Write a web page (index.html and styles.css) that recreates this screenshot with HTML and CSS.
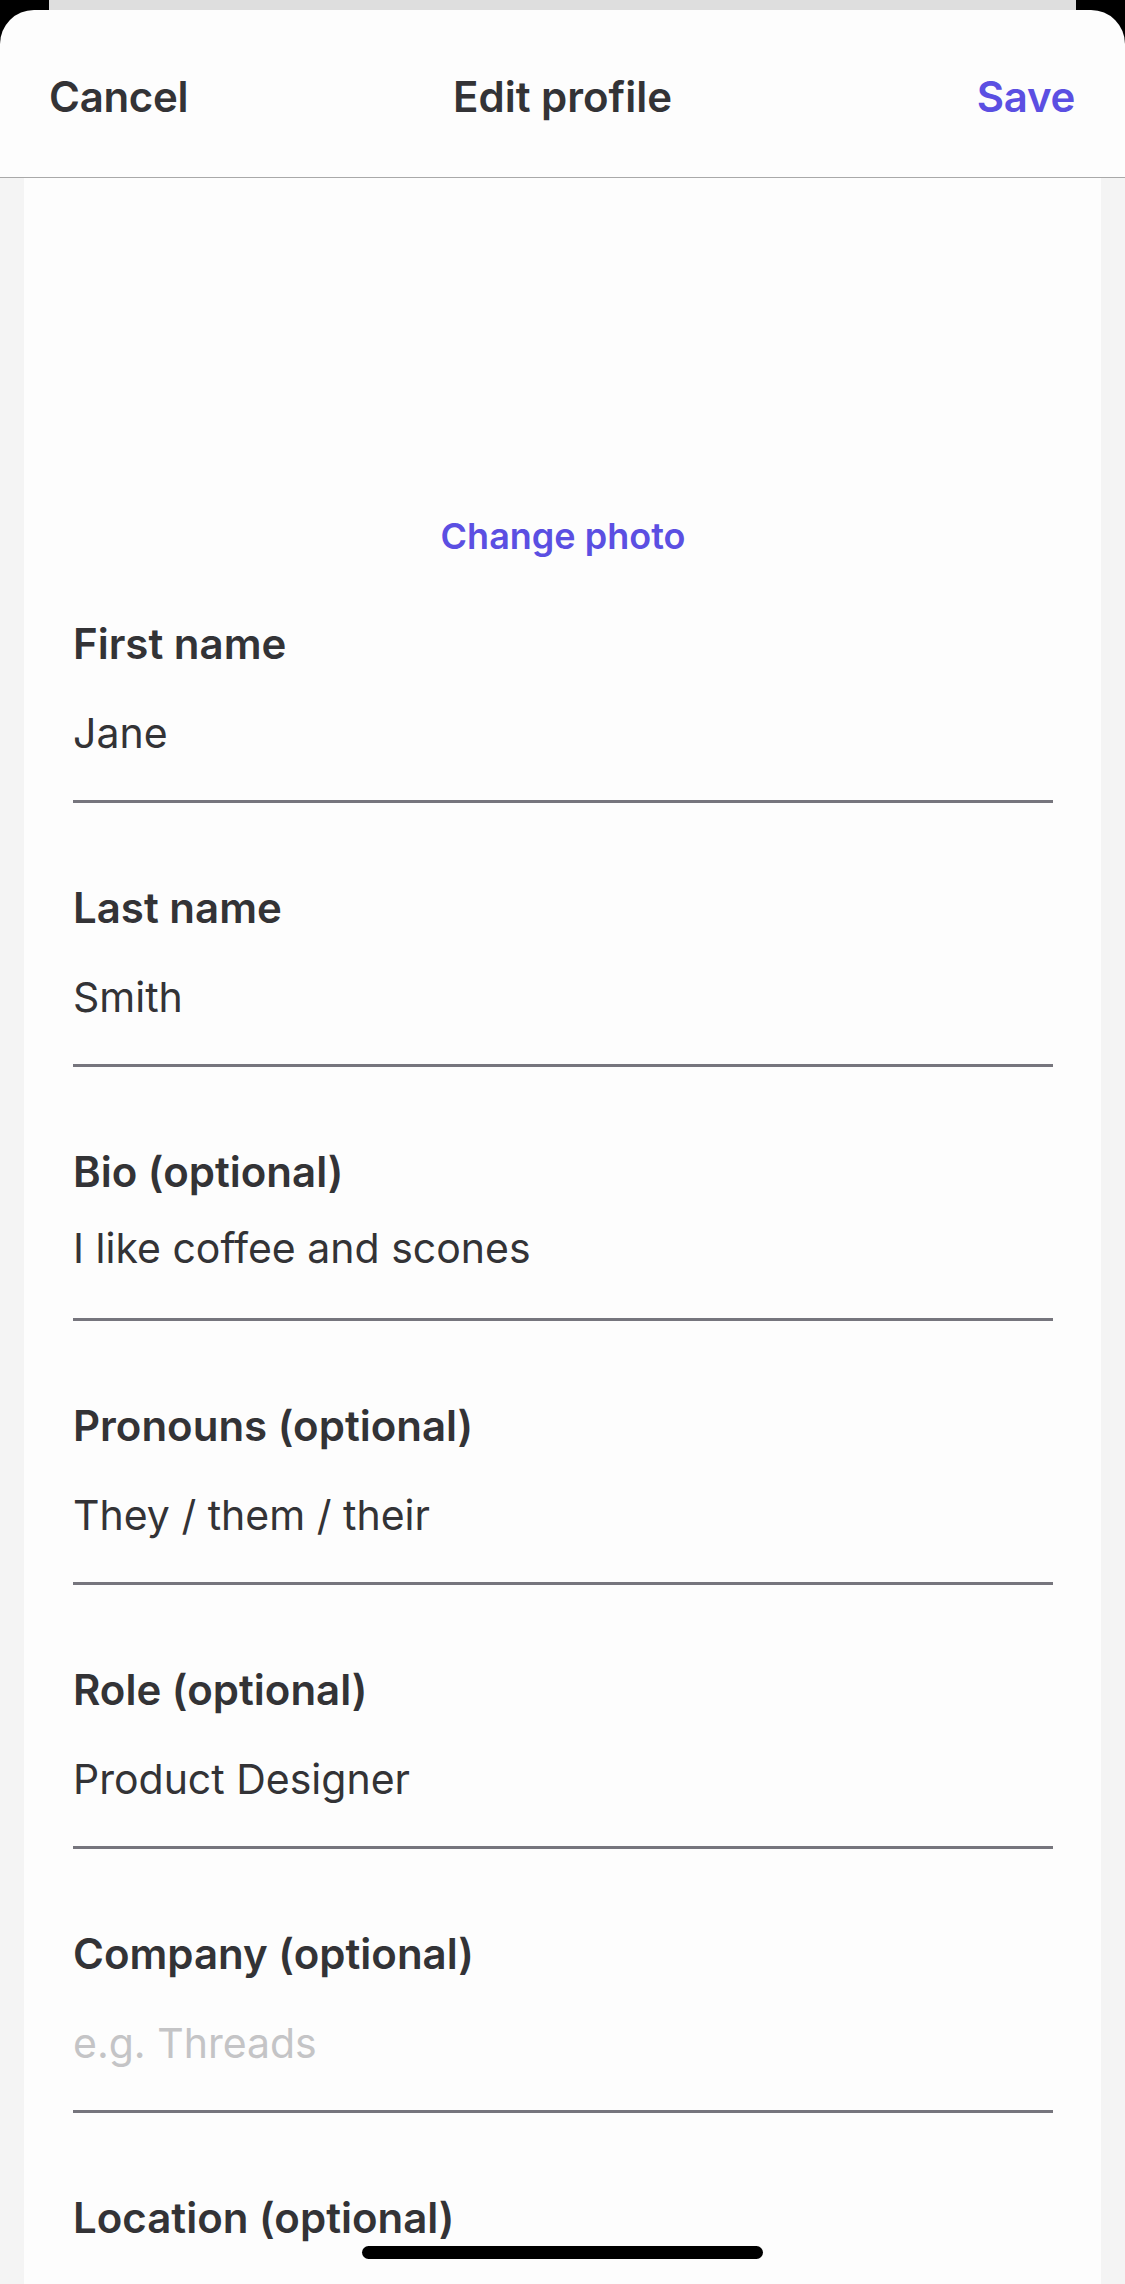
FILE: index.html
```html
<!DOCTYPE html>
<html>
<head>
    <meta charset="utf-8">
    <title>Edit profile</title>
    <link rel="stylesheet" href="styles.css">
</head>
<body>
    <div class="stack-back"></div>
    <div class="sheet">
        <div class="sheet-header">
            <span class="header-btn">Cancel</span>
            <span class="header-title">Edit profile</span>
            <span class="header-btn save">Save</span>
        </div>
        <div class="content">
            <div class="photo-area"></div>
            <div class="change-photo">Change photo</div>

            <div class="field">
                <div class="field-label">First name</div>
                <div class="field-value">Jane</div>
            </div>
            <div class="field">
                <div class="field-label">Last name</div>
                <div class="field-value">Smith</div>
            </div>
            <div class="field field-bio">
                <div class="field-label">Bio (optional)</div>
                <div class="field-value">I like coffee and scones</div>
            </div>
            <div class="field">
                <div class="field-label">Pronouns (optional)</div>
                <div class="field-value">They / them / their</div>
            </div>
            <div class="field">
                <div class="field-label">Role (optional)</div>
                <div class="field-value">Product Designer</div>
            </div>
            <div class="field">
                <div class="field-label">Company (optional)</div>
                <div class="field-value placeholder">e.g. Threads</div>
            </div>
            <div class="field">
                <div class="field-label">Location (optional)</div>
            </div>
        </div>
    </div>
    <div class="home-indicator"></div>
</body>
</html>
```

FILE: styles.css
```css
html, body {
    margin: 0;
    padding: 0;
}
body {
    font-family: Inter, "Noto Sans", sans-serif;
    background-color: #000;
    width: 1125px;
    height: 2284px;
    overflow: hidden;
    position: relative;
    color: #333336;
}
.stack-back {
    height: 10px;
    margin: 0 49px;
    background-color: #dedede;
}
.sheet {
    background-color: #fdfdfd;
    border-radius: 34px 34px 0 0;
    height: 2274px;
    display: flex;
    flex-direction: column;
    overflow: hidden;
}
.sheet-header {
    flex-shrink: 0;
    height: 168px;
    box-sizing: border-box;
    padding: 6px 50px 0 49px;
    border-bottom: 1px solid #a9a9a9;
    display: flex;
    align-items: center;
    justify-content: space-between;
    font-size: 42px;
    font-weight: 600;
}
.header-btn {
    letter-spacing: -0.3px;
}
.header-title {
    position: absolute;
    left: 0;
    right: 0;
    text-align: center;
    pointer-events: none;
}
.save {
    color: #5b4fe2;
}
.content {
    flex: 1;
    background: linear-gradient(to right, #f4f4f4 24px, #fdfdfd 24px, #fdfdfd 1101px, #f4f4f4 1101px);
    padding: 0 72px 0 73px;
}
.photo-area {
    height: 336px;
}
.change-photo {
    text-align: center;
    color: #5b4fe2;
    font-size: 36px;
    font-weight: 600;
    line-height: 44px;
    margin-bottom: 61px;
}
.field {
    padding-bottom: 80px;
}
.field-label {
    font-size: 42px;
    font-weight: 600;
    line-height: 50px;
}
.field-value {
    font-size: 41px;
    line-height: 50px;
    margin-top: 39px;
    padding-bottom: 42px;
    border-bottom: 3px solid #76757d;
}
.field-bio .field-value {
    margin-top: 26px;
    padding-bottom: 45px;
}
.placeholder {
    color: #c4c4c6;
}
.home-indicator {
    position: absolute;
    left: 362px;
    top: 2246px;
    width: 401px;
    height: 13px;
    border-radius: 7px;
    background-color: #000;
}
```
